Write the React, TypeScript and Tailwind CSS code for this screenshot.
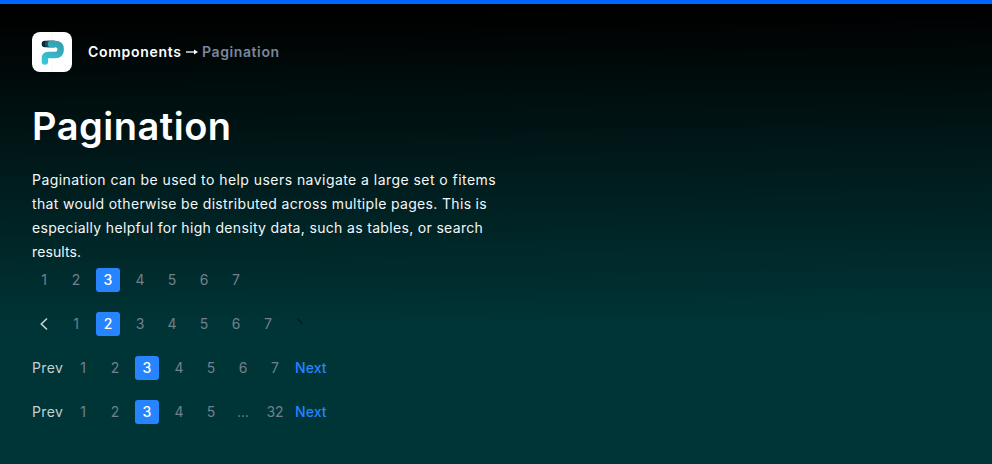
const font = "font-['Inter','Liberation_Sans',sans-serif]";

function Logo() {
  return (
    <div className="h-10 w-10 shrink-0 overflow-hidden rounded-lg bg-white">
      <svg viewBox="0 0 40 40" className="h-full w-full" fill="none">
        <defs>
          <linearGradient id="p" x1="26" y1="8" x2="12" y2="32" gradientUnits="userSpaceOnUse">
            <stop offset="0" stopColor="#2f9fac" />
            <stop offset="1" stopColor="#3cc6dd" />
          </linearGradient>
        </defs>
        <path d="M20 0V40M0 0L40 40M40 0L0 40" stroke="#f1f3f4" strokeWidth=".5" />
        <path d="M12.900 12H22" stroke="#0b2732" strokeWidth="6.400" strokeLinecap="round" />
        <path d="M16 12H22" stroke="#15505d" strokeWidth="6.400" strokeLinecap="round" />
        <path d="M19 12H23Q28.700 12 28.700 17.500Q28.700 23 23 23H16.500Q12.900 23 12.900 26.500V29.500" stroke="url(#p)" strokeWidth="6.400" strokeLinecap="round" />
      </svg>
    </div>
  );
}

function Page({ label, active }: { label: string; active?: boolean }) {
  return (
    <li
      className={
        active
          ? "flex h-6 w-6 items-center justify-center rounded-[3px] bg-[#2684ff] font-medium text-white"
          : "flex h-6 w-6 items-center justify-center text-[#71808e]"
      }
    >
      {label}
    </li>
  );
}

function Pager({ pages, current, kind }: { pages: string[]; current: string; kind?: "arrows" | "text" }) {
  return (
    <ul className="flex h-6 items-center gap-2 text-sm">
      {kind === "arrows" && (
        <li className="flex h-6 w-6 items-center justify-center">
          <svg width="24" height="24" viewBox="0 0 24 24" fill="none">
            <path d="M15 6.500L9.300 12L15 17.500" stroke="#c6d0d1" strokeWidth="1.600" />
          </svg>
        </li>
      )}
      {kind === "text" && (
        <li className="w-[31px] whitespace-nowrap tracking-[0.4px] text-[#c6d0d1]">Prev</li>
      )}
      {pages.map((p) => (
        <Page key={p} label={p} active={p === current} />
      ))}
      {kind === "arrows" && (
        <li className="flex h-6 w-6 items-center justify-center">
          <svg width="24" height="24" viewBox="0 0 24 24" fill="none">
            <path d="M9 6.500L14 11.300" stroke="#011d20" strokeWidth="1.600" />
            <path d="M14 11.300L14.500 12L12.500 14" stroke="#022a2d" strokeWidth="1" />
          </svg>
        </li>
      )}
      {kind === "text" && (
        <li className="w-8 whitespace-nowrap font-medium tracking-[0.1px] text-[#2684ff]">Next</li>
      )}
    </ul>
  );
}

const seven = ["1", "2", "3", "4", "5", "6", "7"];

export default function App() {
  return (
    <main
      className={`${font} h-[464px] w-full overflow-hidden border-t-4 border-[#0065ff] bg-[linear-gradient(179.5deg,#000_2%,#003537_70%)] px-8 pt-7 text-white`}
    >
      <header className="flex items-center gap-4">
        <Logo />
        <nav className="flex items-center text-sm font-semibold">
          <span className="w-[93px] whitespace-nowrap tracking-[0.7px]">Components</span>
          <svg className="ml-[5px] mr-[4px]" width="12" height="8" viewBox="0 0 12 8" fill="none">
            <path d="M0 4H9" stroke="white" strokeWidth="1.300" />
            <path d="M8 1.500L12 4L8 6.500Z" fill="white" />
          </svg>
          <span className="whitespace-nowrap tracking-[0.6px] text-[#7a869a]">Pagination</span>
        </nav>
      </header>
      <h1 className="mt-7 text-[38px] font-semibold leading-[52px] tracking-[0.5px]">Pagination</h1>
      <p className="mt-4 whitespace-nowrap text-sm leading-6 text-[#f4f7f7]">
        <span className="block tracking-[0.45px]">Pagination can be used to help users navigate a large set o fitems</span>
        <span className="block tracking-[0.33px]">that would otherwise be distributed across multiple pages. This is</span>
        <span className="block tracking-[0.33px]">especially helpful for high density data, such as tables, or search</span>
        <span className="block tracking-[0.1px]">results.</span>
      </p>
      <section className="mt-1 flex flex-col gap-5">
        <Pager pages={seven} current="3" />
        <Pager pages={seven} current="2" kind="arrows" />
        <Pager pages={seven} current="3" kind="text" />
        <Pager pages={["1", "2", "3", "4", "5", "...", "32"]} current="3" kind="text" />
      </section>
    </main>
  );
}
